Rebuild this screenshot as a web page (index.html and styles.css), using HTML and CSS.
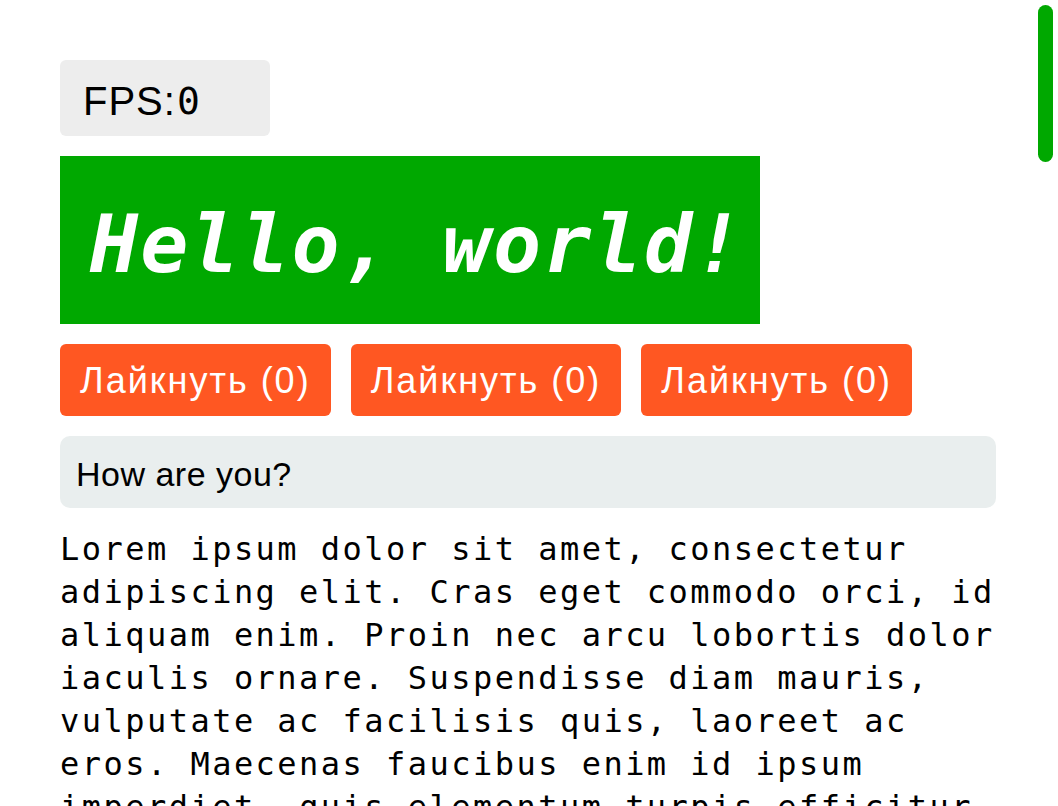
FILE: index.html
```html
<!DOCTYPE html>
<html lang="ru">
<head>
<meta charset="utf-8">
<title>Hello</title>
<link rel="stylesheet" href="styles.css">
</head>
<body>
<div class="scroll-thumb" aria-hidden="true"></div>
<main class="page">
  <div class="fps">FPS:<span class="fps-value">0</span></div>
  <h1 class="banner">Hello, world!</h1>
  <div class="actions">
    <button class="like" type="button">Лайкнуть (0)</button>
    <button class="like" type="button">Лайкнуть (0)</button>
    <button class="like" type="button">Лайкнуть (0)</button>
  </div>
  <input class="field" type="text" value="How are you?">
  <p class="lorem">Lorem ipsum dolor sit amet, consectetur adipiscing elit. Cras eget commodo orci, id aliquam enim. Proin nec arcu lobortis dolor iaculis ornare. Suspendisse diam mauris, vulputate ac facilisis quis, laoreet ac eros. Maecenas faucibus enim id ipsum imperdiet, quis elementum turpis efficitur. Nulla facilisi. Vestibulum ante ipsum primis in faucibus orci luctus et ultrices posuere cubilia curae; Integer vitae nisl vel ligula aliquet fermentum. Donec sit amet neque quis magna dictum pulvinar. Phasellus non velit sed lorem tincidunt venenatis. Aliquam erat volutpat. Sed eget nisi at lectus vulputate dapibus. Curabitur feugiat, urna a tempor pharetra, lacus risus porta ligula, a mattis sem mi in nibh. Praesent euismod finibus ligula, sed placerat neque fringilla non. Nunc posuere justo vel ante cursus, sit amet cursus lectus aliquet. Morbi consequat lacus eget mauris sodales, eget rutrum elit dignissim. Etiam vel ante sed diam luctus congue. Vivamus quis augue vitae purus mattis pellentesque. Duis tincidunt justo at mi fringilla, ut tempus magna mattis. Fusce vel lacus a leo sollicitudin gravida. Quisque sit amet arcu nec erat porttitor tincidunt. Pellentesque habitant morbi tristique senectus et netus et malesuada fames ac turpis egestas. Mauris ac dolor vitae lectus interdum malesuada non sit amet velit. In hac habitasse platea dictumst. Sed sed orci id nunc hendrerit imperdiet. Nam vitae eros eget ipsum tempor gravida vel ut libero. Cras porttitor urna sed tellus molestie, vitae varius turpis feugiat. Ut a odio vitae quam pharetra dapibus. Nullam venenatis nibh eu dolor aliquam, at vehicula lectus maximus. Suspendisse potenti. Aenean finibus risus a neque convallis, ac vestibulum erat posuere. Integer rutrum nibh sit amet velit ullamcorper, at ultrices nisl placerat. Vivamus elementum nunc non mauris ultrices, a sagittis odio dapibus.</p>
</main>
</body>
</html>
```
FILE: styles.css
```css
html {
  scrollbar-width: none;
}
::-webkit-scrollbar {
  width: 0;
  height: 0;
}

body {
  margin: 0;
  background: #ffffff;
  color: #000000;
  font-family: "Liberation Sans", Arial, sans-serif;
}

.scroll-thumb {
  position: fixed;
  top: 5px;
  right: 5px;
  width: 15px;
  height: 157px;
  border-radius: 8px;
  background: #00a800;
  z-index: 10;
}

.page {
  width: 936px;
  padding: 60px 0 40px 60px;
  display: flex;
  flex-direction: column;
  align-items: flex-start;
}

.fps {
  box-sizing: border-box;
  width: 210px;
  height: 76px;
  padding: 6px 0 0 23px;
  background: #ededed;
  border-radius: 6px;
  font-size: 40px;
  letter-spacing: 1px;
  display: flex;
  align-items: center;
}

.fps-value {
  font-family: "DejaVu Sans Mono", monospace;
  font-size: 38px;
  letter-spacing: 0;
  margin-left: 1px;
}

.banner {
  box-sizing: border-box;
  width: 700px;
  height: 168px;
  margin: 20px 0 0;
  padding: 8px 0 0 30px;
  background: #00a800;
  color: #ffffff;
  font-family: "DejaVu Sans Mono", monospace;
  font-weight: bold;
  font-style: italic;
  font-size: 80px;
  letter-spacing: 2.2px;
  display: flex;
  align-items: center;
  white-space: nowrap;
  overflow: hidden;
}

.actions {
  display: flex;
  gap: 20px;
  margin-top: 20px;
}

.like {
  height: 72px;
  padding: 2px 20px 0;
  border: none;
  border-radius: 6px;
  background: #ff5722;
  color: #ffffff;
  font-family: "Liberation Sans", Arial, sans-serif;
  font-size: 36px;
  letter-spacing: 2px;
  cursor: pointer;
}

.field {
  box-sizing: border-box;
  width: 936px;
  height: 72px;
  margin-top: 20px;
  padding: 4px 16px 0;
  border: none;
  border-radius: 10px;
  background: #e9eeee;
  color: #000000;
  font-family: "Liberation Sans", Arial, sans-serif;
  font-size: 34px;
  letter-spacing: 0.5px;
  outline: none;
}

.lorem {
  margin: 20px 0 0;
  width: 936px;
  font-family: "DejaVu Sans Mono", monospace;
  font-size: 32px;
  letter-spacing: 2.47px;
  line-height: 43px;
}
```
